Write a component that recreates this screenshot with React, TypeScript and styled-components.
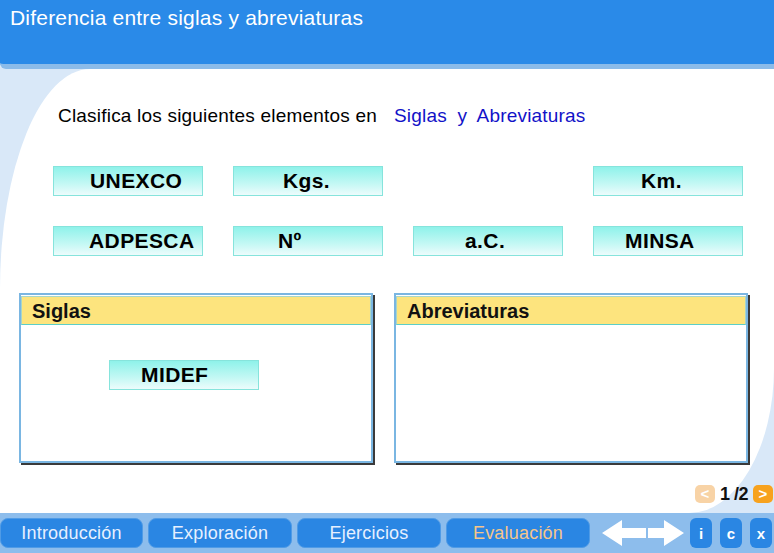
import * as React from 'react'
import styled, { createGlobalStyle } from 'styled-components'

const GlobalStyle = createGlobalStyle`
	html, body {
		margin: 0;
		padding: 0;
		background: #ffffff;
	}
	body {
		font-family: 'Liberation Sans', Arial, sans-serif;
	}
`

const Screen = styled.div`
	width: 774px;
	height: 553px;
	display: flex;
	flex-direction: column;
	overflow: hidden;
	background-color: #d9e8f8;
`

const Header = styled.div`
	height: 64px;
	background-color: #2a8ae8;
	border-bottom: 5px solid #8bbbe9;
	border-bottom-left-radius: 6px;
	box-sizing: content-box;
`

const Title = styled.div`
	color: #ffffff;
	font-size: 21px;
	line-height: 24px;
	letter-spacing: 0.2px;
	padding: 6px 0 0 10px;
`

const Stage = styled.div`
	flex: 1;
	display: flex;
	flex-direction: column;
`

const Sheet = styled.div`
	flex: 1;
	background-color: #ffffff;
	border-radius: 90px 0 85px 0 / 220px 0 145px 0;
	padding: 36px 1px 0 19px;
	display: flex;
	flex-direction: column;
`

const Instruction = styled.div`
	margin-left: 39px;
	font-size: 19px;
	line-height: 22px;
	letter-spacing: 0.2px;
	color: #000000;
`

const Highlight = styled.span`
	color: #1212c8;
	margin-left: 17px;
	word-spacing: 5px;
`

const CardGrid = styled.div`
	margin: 39px 0 0 34px;
	display: grid;
	grid-template-columns: repeat(4, 150px);
	grid-auto-rows: 30px;
	gap: 30px;
`

const Card = styled.div<{ $indent: number; $empty?: boolean }>`
	box-sizing: border-box;
	width: 150px;
	height: 30px;
	display: flex;
	align-items: center;
	padding-left: ${p => p.$indent}px;
	font-size: 21px;
	font-weight: bold;
	letter-spacing: 0.4px;
	white-space: nowrap;
	color: #000000;
	border: 1px solid #86e4dc;
	background: linear-gradient(to bottom, #8ff2ea 0%, #c4f8f4 60%, #ecfcfc 100%);
	visibility: ${p => (p.$empty ? 'hidden' : 'visible')};
`

const Boxes = styled.div`
	margin-top: 37px;
	display: flex;
	gap: 21px;
`

const DropBox = styled.div`
	box-sizing: border-box;
	width: 354px;
	height: 170px;
	border: 2px solid #7ab6e2;
	box-shadow: 2px 2px 0 #3a3a3a;
	background-color: #ffffff;
	display: flex;
	flex-direction: column;
`

const BoxTitle = styled.div`
	margin: 1px 0 0 0;
	height: 29px;
	box-sizing: border-box;
	background-color: #fde47e;
	border: 1px solid #a8d6c8;
	border-bottom-color: #5ccfc8;
	padding-left: 10px;
	font-size: 20px;
	font-weight: bold;
	line-height: 28px;
	color: #111111;
`

const BoxBody = styled.div`
	padding: 35px 0 0 88px;
`

const Pager = styled.div`
	margin-top: 22px;
	display: flex;
	justify-content: flex-end;
	align-items: center;
	gap: 5px;
	height: 18px;
`

const PageButton = styled.div<{ $active?: boolean }>`
	width: 20px;
	height: 18px;
	border-radius: 5px;
	background-color: ${p => (p.$active ? '#f7a21e' : '#f8d3a6')};
	color: #ffffff;
	font-size: 15px;
	font-weight: bold;
	display: flex;
	align-items: center;
	justify-content: center;
	line-height: 18px;
`

const PageLabel = styled.div`
	font-size: 18px;
	font-weight: bold;
	color: #111111;
	line-height: 18px;
	letter-spacing: -0.5px;
`

const NavBar = styled.div`
	height: 40px;
	box-sizing: border-box;
	padding: 5px 0 5px 0;
	background-color: #8dbdec;
	display: flex;
	align-items: stretch;
	gap: 5px;
`

const Tab = styled.div<{ $current?: boolean }>`
	width: 144px;
	box-sizing: border-box;
	border-radius: 8px;
	background-color: #2a86e3;
	border: 1px solid #4f9be6;
	color: ${p => (p.$current ? '#f6c58a' : '#e6f0ff')};
	font-size: 18px;
	display: flex;
	align-items: center;
	justify-content: center;
	letter-spacing: 0.2px;
	&:first-child {
		width: 143px;
	}
`

const Arrows = styled.div`
	margin-left: 7px;
	display: flex;
	align-items: center;
	width: 84px;
`

const ToolGroup = styled.div`
	display: flex;
	gap: 8px;
	margin-left: -1px;
`

const Tool = styled.div`
	width: 22px;
	border-radius: 6px;
	background-color: #2a86e3;
	color: #ffffff;
	font-size: 15px;
	font-weight: bold;
	display: flex;
	align-items: center;
	justify-content: center;
`

const DoubleArrow = () => (
	<svg width="84" height="30" viewBox="0 0 84 30">
		<polygon points="0,15 20,2 20,10 44,10 44,20 20,20 20,28" fill="#ffffff" />
		<polygon points="82,15 62,2 62,10 46,10 46,20 62,20 62,28" fill="#ffffff" />
	</svg>
)

const cards = [
	{ label: 'UNEXCO', indent: 36 },
	{ label: 'Kgs.', indent: 49 },
	{ label: '', indent: 0 },
	{ label: 'Km.', indent: 47 },
	{ label: 'ADPESCA', indent: 35 },
	{ label: 'Nº', indent: 44 },
	{ label: 'a.C.', indent: 51 },
	{ label: 'MINSA', indent: 31 },
]

const tabs = ['Introducción', 'Exploración', 'Ejercicios', 'Evaluación']

export default function App() {
	return (
		<>
			<GlobalStyle />
			<Screen>
				<Header>
					<Title>Diferencia entre siglas y abreviaturas</Title>
				</Header>
				<Stage>
					<Sheet>
						<Instruction>
							Clasifica los siguientes elementos en
							<Highlight>Siglas y Abreviaturas</Highlight>
						</Instruction>
						<CardGrid>
							{cards.map((c, i) => (
								<Card key={i} $indent={c.indent} $empty={c.label === ''}>
									{c.label}
								</Card>
							))}
						</CardGrid>
						<Boxes>
							<DropBox>
								<BoxTitle>Siglas</BoxTitle>
								<BoxBody>
									<Card $indent={31}>MIDEF</Card>
								</BoxBody>
							</DropBox>
							<DropBox>
								<BoxTitle>Abreviaturas</BoxTitle>
							</DropBox>
						</Boxes>
						<Pager>
							<PageButton>&lt;</PageButton>
							<PageLabel>1 /2</PageLabel>
							<PageButton $active>&gt;</PageButton>
						</Pager>
					</Sheet>
				</Stage>
				<NavBar>
					{tabs.map(t => (
						<Tab key={t} $current={t === 'Evaluación'}>
							{t}
						</Tab>
					))}
					<Arrows>
						<DoubleArrow />
					</Arrows>
					<ToolGroup>
						<Tool>i</Tool>
						<Tool>c</Tool>
						<Tool>x</Tool>
					</ToolGroup>
				</NavBar>
			</Screen>
		</>
	)
}
